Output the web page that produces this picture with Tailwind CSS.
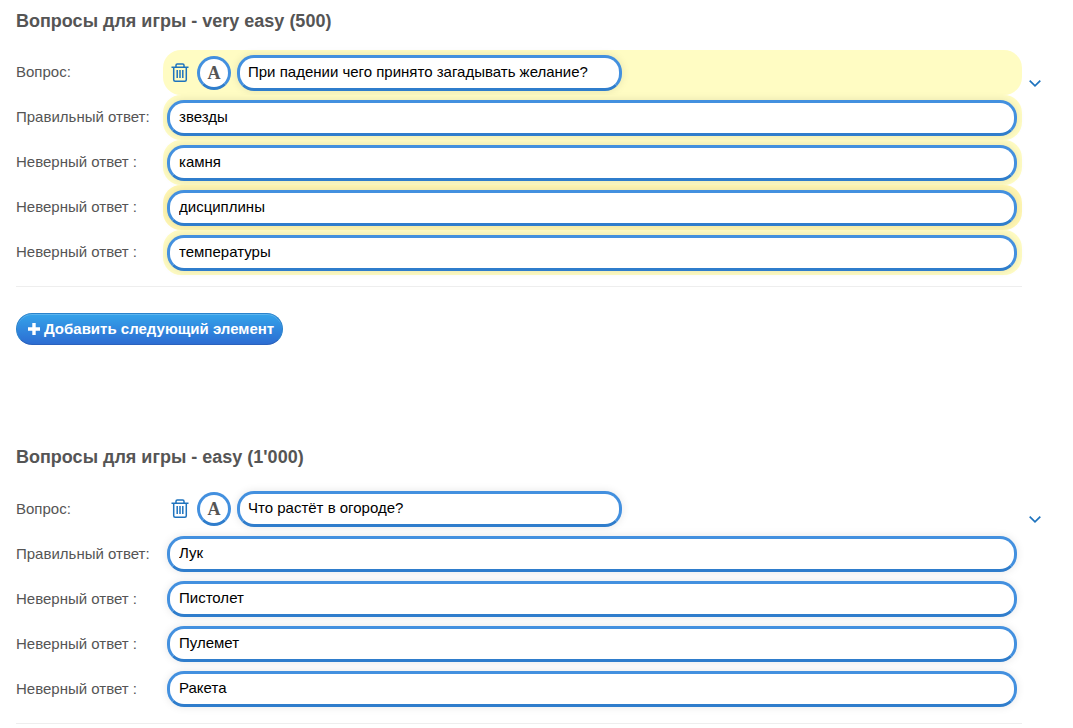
<!DOCTYPE html>
<html lang="ru">
<head>
<meta charset="utf-8">
<meta name="viewport" content="width=device-width, initial-scale=1">
<title>Вопросы для игры</title>
<script src="https://cdn.jsdelivr.net/npm/@tailwindcss/browser@4"></script>
</head>
<body class="bg-white font-['Liberation_Sans',Arial,sans-serif] text-[15px] text-[#555] overflow-x-hidden">
<svg class="hidden">
  <symbol id="trash" viewBox="0 0 18 20"><g fill="none" stroke="currentColor" stroke-width="1.5"><path d="M.5 4.2h17M5 4V2.2Q5 .9 6.300 .9h5.400Q13 .9 13 2.200V4M2.700 4.500v12.200q0 1.500 1.500 1.500h9.600q1.500 0 1.500-1.500V4.500M6.200 7v8M9 7v8M11.800 7v8"/></g></symbol>
  <symbol id="chevron" viewBox="0 0 12 8"><path d="M.7 .6 6 5.900 11.300 .6" fill="none" stroke="currentColor" stroke-width="1.700"/></symbol>
</svg>
<main class="pl-4">
  <section class="h-[436px] pt-[9px]">
    <h2 class="text-lg leading-6 font-bold">Вопросы для игры - very easy (500)</h2>
    <div class="mt-[17px] flex">
      <div class="min-w-0 flex-1 border-b border-[#eee] pb-[11px]">
        <div class="flex h-[45px]">
          <label for="q1" class="w-[147px] shrink-0 leading-[44px]">Вопрос:</label>
          <div class="flex flex-1 items-center rounded-[18px] bg-[#fffcc3] pl-2">
            <button type="button" aria-label="Удалить" class="text-[#1e73be]"><svg class="h-5 w-[18px]"><use href="#trash"/></svg></button>
            <button type="button" class="ml-2 h-[34px] w-[34px] rounded-full border-[3px] border-[#4390df] border-b-[#2f7dcc] bg-white font-['Liberation_Serif',serif] text-lg leading-7 font-bold">A</button>
            <input id="q1" value="При падении чего принято загадывать желание?" class="ml-[6px] h-9 w-[385px] rounded-[17px] border-[3px] border-[#4390df] border-b-[#2f7dcc] bg-white px-2 pb-[2px] text-black shadow-[0_0_8px_#0000001a] outline-none">
          </div>
        </div>
        <div class="flex h-[45px]">
          <label for="a1" class="w-[147px] shrink-0 leading-[44px]">Правильный ответ:</label>
          <div class="flex flex-1 items-center rounded-[18px] bg-[#fffcc3] pr-[5px] pl-1"><input id="a1" value="звезды" class="h-9 w-full rounded-[17px] border-[3px] border-[#4390df] border-b-[#2f7dcc] bg-white px-[9px] pb-[2px] text-black shadow-[0_0_8px_#0000001a] outline-none"></div>
        </div>
        <div class="flex h-[45px]">
          <label for="a2" class="w-[147px] shrink-0 leading-[44px]">Неверный ответ :</label>
          <div class="flex flex-1 items-center rounded-[18px] bg-[#fffcc3] pr-[5px] pl-1"><input id="a2" value="камня" class="h-9 w-full rounded-[17px] border-[3px] border-[#4390df] border-b-[#2f7dcc] bg-white px-[9px] pb-[2px] text-black shadow-[0_0_8px_#0000001a] outline-none"></div>
        </div>
        <div class="flex h-[45px]">
          <label for="a3" class="w-[147px] shrink-0 leading-[44px]">Неверный ответ :</label>
          <div class="flex flex-1 items-center rounded-[18px] bg-[#fff6b2] pr-[5px] pl-1"><input id="a3" value="дисциплины" class="h-9 w-full rounded-[17px] border-[3px] border-[#4390df] border-b-[#2f7dcc] bg-white px-[9px] pb-[2px] text-black shadow-[0_0_8px_#0000001a] outline-none"></div>
        </div>
        <div class="flex h-[45px]">
          <label for="a4" class="w-[147px] shrink-0 leading-[44px]">Неверный ответ :</label>
          <div class="flex flex-1 items-center rounded-[18px] bg-[#fffcc3] pr-[5px] pl-1"><input id="a4" value="температуры" class="h-9 w-full rounded-[17px] border-[3px] border-[#4390df] border-b-[#2f7dcc] bg-white px-[9px] pb-[2px] text-black shadow-[0_0_8px_#0000001a] outline-none"></div>
        </div>
      </div>
      <div class="w-[51px] shrink-0 pt-[30px] pl-[7px]"><button type="button" aria-label="Развернуть" class="block text-[#1e73be]"><svg class="h-2 w-3"><use href="#chevron"/></svg></button></div>
    </div>
    <button type="button" class="mt-[26px] flex h-8 items-center gap-1 rounded-full border border-[#2b83cc] border-b-[#2a62bd] bg-linear-to-b from-[#35a3ea] to-[#2d6dd2] pr-2 pl-[11px] font-bold text-white shadow-[inset_0_1px_0_#ffffff33]"><svg class="h-3 w-3" viewBox="0 0 12 12"><path d="M4.300 0h3.400v4.300H12v3.400H7.700V12H4.300V7.700H0V4.300h4.300z" fill="currentColor"/></svg>Добавить следующий элемент</button>
  </section>
  <section class="pt-[9px]">
    <h2 class="text-lg leading-6 font-bold">Вопросы для игры - easy (1'000)</h2>
    <div class="mt-[17px] flex">
      <div class="min-w-0 flex-1 border-b border-[#eee] pb-3">
        <div class="flex h-[45px]">
          <label for="q2" class="w-[147px] shrink-0 leading-[46px]">Вопрос:</label>
          <div class="flex flex-1 items-center pl-2">
            <button type="button" aria-label="Удалить" class="text-[#1e73be]"><svg class="h-5 w-[18px]"><use href="#trash"/></svg></button>
            <button type="button" class="ml-2 h-[34px] w-[34px] rounded-full border-[3px] border-[#4390df] border-b-[#2f7dcc] bg-white font-['Liberation_Serif',serif] text-lg leading-7 font-bold">A</button>
            <input id="q2" value="Что растёт в огороде?" class="ml-[6px] h-9 w-[385px] rounded-[17px] border-[3px] border-[#4390df] border-b-[#2f7dcc] bg-white px-2 pb-[2px] text-black shadow-[0_0_8px_#0000001a] outline-none">
          </div>
        </div>
        <div class="flex h-[45px]">
          <label for="b1" class="w-[147px] shrink-0 leading-[46px]">Правильный ответ:</label>
          <div class="flex flex-1 items-center pr-[5px] pl-1"><input id="b1" value="Лук" class="h-9 w-full rounded-[17px] border-[3px] border-[#4390df] border-b-[#2f7dcc] bg-white px-[9px] pb-[2px] text-black shadow-[0_0_8px_#0000001a] outline-none"></div>
        </div>
        <div class="flex h-[45px]">
          <label for="b2" class="w-[147px] shrink-0 leading-[46px]">Неверный ответ :</label>
          <div class="flex flex-1 items-center pr-[5px] pl-1"><input id="b2" value="Пистолет" class="h-9 w-full rounded-[17px] border-[3px] border-[#4390df] border-b-[#2f7dcc] bg-white px-[9px] pb-[2px] text-black shadow-[0_0_8px_#0000001a] outline-none"></div>
        </div>
        <div class="flex h-[45px]">
          <label for="b3" class="w-[147px] shrink-0 leading-[46px]">Неверный ответ :</label>
          <div class="flex flex-1 items-center pr-[5px] pl-1"><input id="b3" value="Пулемет" class="h-9 w-full rounded-[17px] border-[3px] border-[#4390df] border-b-[#2f7dcc] bg-white px-[9px] pb-[2px] text-black shadow-[0_0_8px_#0000001a] outline-none"></div>
        </div>
        <div class="flex h-[45px]">
          <label for="b4" class="w-[147px] shrink-0 leading-[46px]">Неверный ответ :</label>
          <div class="flex flex-1 items-center pr-[5px] pl-1"><input id="b4" value="Ракета" class="h-9 w-full rounded-[17px] border-[3px] border-[#4390df] border-b-[#2f7dcc] bg-white px-[9px] pb-[2px] text-black shadow-[0_0_8px_#0000001a] outline-none"></div>
        </div>
      </div>
      <div class="w-[51px] shrink-0 pt-[30px] pl-[7px]"><button type="button" aria-label="Развернуть" class="block text-[#1e73be]"><svg class="h-2 w-3"><use href="#chevron"/></svg></button></div>
    </div>
  </section>
</main>
</body>
</html>
